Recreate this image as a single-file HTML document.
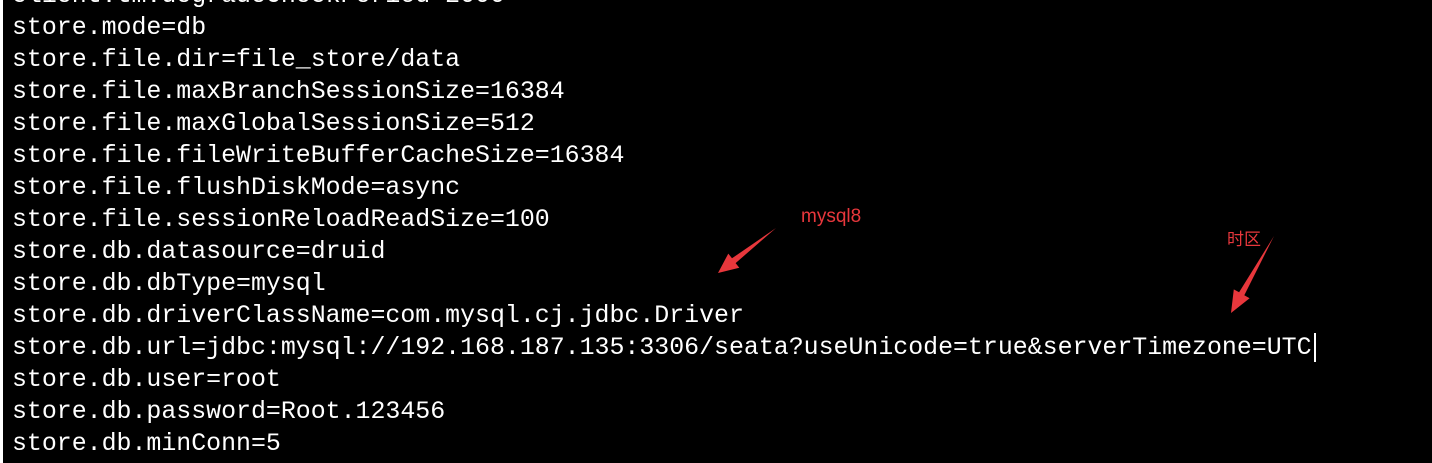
<!DOCTYPE html>
<html><head><meta charset="utf-8"><style>
html,body{margin:0;padding:0;background:#000;width:1432px;height:463px;overflow:hidden;position:relative}
.w{position:absolute;left:0;top:0;width:3px;height:463px;background:#fff}
pre{position:absolute;left:12px;top:-20px;margin:0;font-family:"Liberation Mono",monospace;font-size:24.9px;line-height:32px;color:#fff}
.r{position:absolute;color:#e8373c;font-family:"Liberation Sans","Noto Sans CJK SC",sans-serif}
.cur{position:absolute;left:1314px;top:333px;width:2px;height:29px;background:#fff}
</style></head><body>
<div class="w"></div>
<pre>client.tm.degradeCheckPeriod=2000
store.mode=db
store.file.dir=file_store/data
store.file.maxBranchSessionSize=16384
store.file.maxGlobalSessionSize=512
store.file.fileWriteBufferCacheSize=16384
store.file.flushDiskMode=async
store.file.sessionReloadReadSize=100
store.db.datasource=druid
store.db.dbType=mysql
store.db.driverClassName=com.mysql.cj.jdbc.Driver
store.db.url=jdbc:mysql://192.168.187.135:3306/seata?useUnicode=true&amp;serverTimezone=UTC
store.db.user=root
store.db.password=Root.123456
store.db.minConn=5</pre>
<div class="cur"></div>
<div class="r" style="left:801px;top:206px;font-size:19px">mysql8</div>
<div class="r" style="left:1227px;top:225px;font-size:17px">时区</div>
<svg width="1432" height="463" style="position:absolute;left:0;top:0">
<polygon fill="#e8373c" points="776,228 735.6,263.1 739.3,267.8 718,273 728.3,253.6 732,258.3"/>
<polygon fill="#e8373c" points="1274,236 1244.3,295.3 1249.6,298.2 1231,313 1233.8,289.4 1239.1,292.3"/>
</svg>
</body></html>
